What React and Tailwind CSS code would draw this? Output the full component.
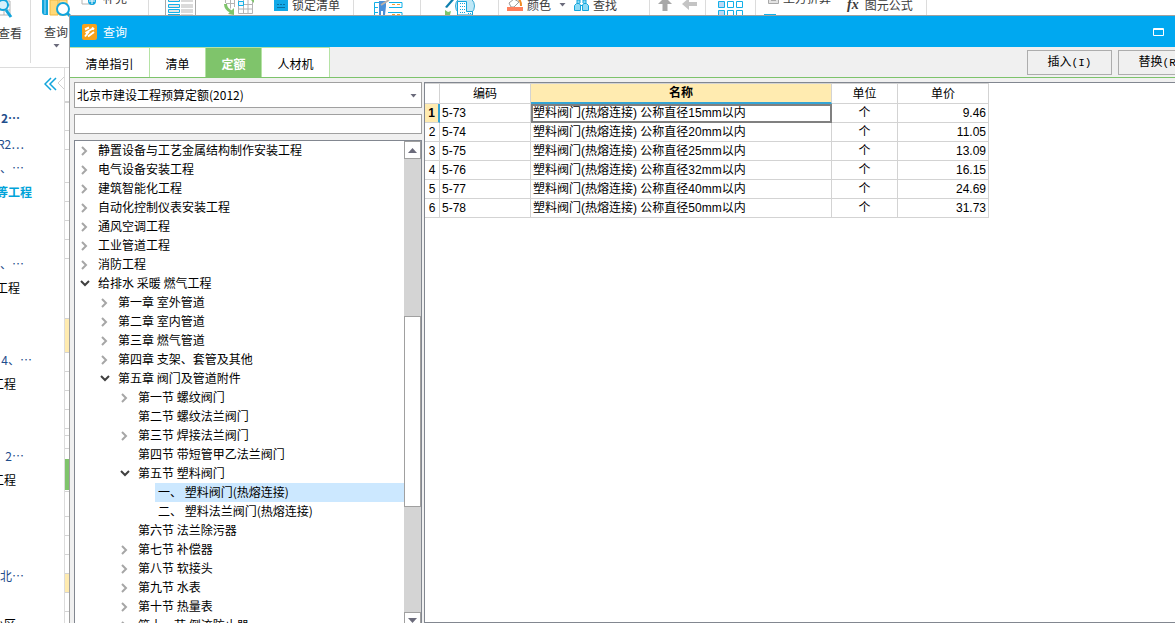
import { useState } from "react"
import clsx from "clsx"

const outline = [
  { text: "2⋯", style: "pr-11 font-bold text-[#1f4e8c] items-start leading-5" },
  { text: "R2⋯", style: "pr-10 text-[#1f4e8c] items-center leading-4" },
  { text: "、⋯", style: "pr-10 text-[#1f4e8c] items-center leading-4" },
  { text: "等工程", style: "pr-8 font-bold text-[#00a3d9] items-center leading-4" },
  { text: "", style: "" },
  { text: "", style: "" },
  { text: "、⋯", style: "pr-10 text-[#1f4e8c] items-center leading-4" },
  { text: "工程", style: "pr-11 text-black items-center leading-4" },
  { text: "", style: "" },
  { text: "", style: "" },
  { text: "4、⋯", style: "pr-8 text-[#1f4e8c] items-center leading-4" },
  { text: "工程", style: "pr-12 text-black items-center leading-4" },
  { text: "", style: "" },
  { text: "", style: "" },
  { text: "2⋯", style: "pr-10 text-[#1f4e8c] items-center leading-4" },
  { text: "工程", style: "pr-12 text-black items-center leading-4" },
  { text: "", style: "" },
  { text: "", style: "" },
  { text: "", style: "" },
  { text: "北⋯", style: "pr-10 text-[#1f4e8c] items-center leading-4" },
  { text: "", style: "" },
  { text: "小区", style: "pr-12 text-black items-center leading-4" },
]

// slice of the grid that stays visible left of the dialog
const gridSlice = [
  "h-[35px] border-b-2 border-[#3fb4e5]",
  "h-[28px] border-b",
  "h-[19px] border-b",
  "h-[33px] border-b",
  "h-[19px] border-b",
  "h-[19px] border-b",
  "h-[19px] border-b",
  "h-[19px] border-b",
  "h-[60px] border-b",
  "h-[34px] border-b bg-[#ffebb0]",
  "h-[19px] border-b",
  "h-[19px] border-b",
  "h-[19px] border-b",
  "h-[19px] border-b",
  "h-[7px] border-b",
  "h-[13px] border-b",
  "h-[10px]",
  "h-[31px] bg-[#7fc46b]",
  "h-[2px] border-b",
  "h-[25px] border-b",
  "h-[19px] border-b",
  "h-[19px] border-b",
  "h-[19px] border-b",
  "h-[19px] border-b bg-[#ffebb0]",
  "h-[19px] border-b",
]

const tree = [
  { level: 0, text: "静置设备与工艺金属结构制作安装工程", state: "closed" },
  { level: 0, text: "电气设备安装工程", state: "closed" },
  { level: 0, text: "建筑智能化工程", state: "closed" },
  { level: 0, text: "自动化控制仪表安装工程", state: "closed" },
  { level: 0, text: "通风空调工程", state: "closed" },
  { level: 0, text: "工业管道工程", state: "closed" },
  { level: 0, text: "消防工程", state: "closed" },
  { level: 0, text: "给排水 采暖 燃气工程", state: "open" },
  { level: 1, text: "第一章 室外管道", state: "closed" },
  { level: 1, text: "第二章 室内管道", state: "closed" },
  { level: 1, text: "第三章 燃气管道", state: "closed" },
  { level: 1, text: "第四章 支架、套管及其他", state: "closed" },
  { level: 1, text: "第五章 阀门及管道附件", state: "open" },
  { level: 2, text: "第一节 螺纹阀门", state: "closed" },
  { level: 2, text: "第二节 螺纹法兰阀门" },
  { level: 2, text: "第三节 焊接法兰阀门", state: "closed" },
  { level: 2, text: "第四节 带短管甲乙法兰阀门" },
  { level: 2, text: "第五节 塑料阀门", state: "open" },
  { level: 3, text: "一、 塑料阀门(热熔连接)" },
  { level: 3, text: "二、 塑料法兰阀门(热熔连接)" },
  { level: 2, text: "第六节 法兰除污器" },
  { level: 2, text: "第七节 补偿器", state: "closed" },
  { level: 2, text: "第八节 软接头", state: "closed" },
  { level: 2, text: "第九节 水表", state: "closed" },
  { level: 2, text: "第十节 热量表", state: "closed" },
  { level: 2, text: "第十一节 倒流防止器", state: "closed" },
]

const indent = ["pl-0", "pl-5", "pl-10", "pl-15"]

const rows = [
  { code: "5-73", name: "塑料阀门(热熔连接) 公称直径15mm以内", unit: "个", price: "9.46" },
  { code: "5-74", name: "塑料阀门(热熔连接) 公称直径20mm以内", unit: "个", price: "11.05" },
  { code: "5-75", name: "塑料阀门(热熔连接) 公称直径25mm以内", unit: "个", price: "13.09" },
  { code: "5-76", name: "塑料阀门(热熔连接) 公称直径32mm以内", unit: "个", price: "16.15" },
  { code: "5-77", name: "塑料阀门(热熔连接) 公称直径40mm以内", unit: "个", price: "24.69" },
  { code: "5-78", name: "塑料阀门(热熔连接) 公称直径50mm以内", unit: "个", price: "31.73" },
]

const tabs = [
  { name: "清单指引", width: "w-20" },
  { name: "清单", width: "w-14" },
  { name: "定额", width: "w-14" },
  { name: "人材机", width: "w-17" },
]

function Caret({ className }) {
  return (
    <svg width="7" height="4" viewBox="0 0 7 4" className={className}>
      <path d="M.5 0h6L3.5 3.500z" fill="#6b6b7b" />
    </svg>
  )
}

function RibbonGroup({ className, children }) {
  return (
    <div className={clsx("flex h-[63px] shrink-0 items-start border-r border-[#dcdcdc]", className)}>
      {children}
    </div>
  )
}

function SmallTool({ className, children }) {
  return (
    <button className={clsx("flex h-2.5 items-center whitespace-nowrap", className)}>{children}</button>
  )
}

function ViewIcon() {
  return (
    <svg width="13" height="19" viewBox="0 0 13 19" fill="none">
      <path d="M0 1h10v14H0M0 5h10M0 10h10M4 0v15" stroke="#b4b4b4" />
      <circle cx="3" cy="5" r="5" fill="#d9f1fb" stroke="#12a5dc" strokeWidth="2" />
      <path d="M6 10l5 7" stroke="#12a5dc" strokeWidth="3" />
    </svg>
  )
}

function QueryIcon() {
  return (
    <svg width="29" height="20" viewBox="0 0 29 20" fill="none">
      <path d="M0 0h6v15H3c-2 0-3-1-3-3z" fill="#12a5dc" />
      <path d="M3 0v14" stroke="#a8e0f7" />
      <path d="M8 0h8v15H8z" fill="#ffd978" stroke="#f0b840" />
      <path d="M17 0h8v15h-8z" fill="#ffe39a" stroke="#f0b840" />
      <circle cx="21" cy="9" r="6" fill="#fff" stroke="#12a5dc" strokeWidth="2" />
      <path d="M25 13l4 4" stroke="#12a5dc" strokeWidth="3" />
    </svg>
  )
}

function SupplementIcon() {
  return (
    <svg width="16" height="16" viewBox="0 0 16 16" fill="none">
      <path d="M1 0v14h12V0" stroke="#b4b4b4" />
      <circle cx="11" cy="11" r="4" fill="#12a5dc" />
      <path d="M11 8v6M8 11h6" stroke="#fff" />
    </svg>
  )
}

function ListIcon() {
  return (
    <svg width="31" height="15" viewBox="0 0 31 15" fill="none">
      <path d="M.5 0v15M30.500 0v15" stroke="#a8a8a8" />
      <path d="M16 0h12v2H16zM16 4h12v4H16zM16 9h12v4H16zM16 14h12v1H16z" fill="#dadada" />
      <path
        d="M3.500 0v1.500h11V0M3.500 4.500h11v3h-11zM3.500 9.500h11v3h-11zM3 14.500h12"
        stroke="#12b0e8"
        fill="#e5e5e5"
      />
    </svg>
  )
}

function SheetIcon() {
  return (
    <svg width="34" height="15" viewBox="0 0 34 15" fill="none">
      <path d="M1.500 4c0 4 2 6 6 8" stroke="#7fc46b" strokeWidth="3" />
      <path d="M4 14l6 1V8z" fill="#7fc46b" />
      <path d="M1.500 0v3M6.500 0v8.500M10.500 0v7M2 3.500h9" stroke="#b4b4b4" />
      <path d="M14.500 0v13.500h14V0M14 4.500h15M14 9h15M19.500 0v13M24 0v13" stroke="#b4b4b4" />
      <path d="M14.500 1.500h5v4h-5z" stroke="#12b0e8" fill="#e3f5fc" />
      <path d="M27 0l3 3V0z" fill="#7fc46b" />
    </svg>
  )
}

function LockIcon() {
  return (
    <svg width="14" height="12" viewBox="0 0 14 12" fill="none">
      <path d="M3.500 3V0M10.500 3V0" stroke="#12a5dc" strokeWidth="2" />
      <path d="M0 1h14v11H0z" fill="#12a9e8" />
      <path d="M3 5.500h2M6 5.500h2M9 5.500h2M3 8.500h8" stroke="#0b6fa0" />
    </svg>
  )
}

function WorkerIcon() {
  return (
    <svg width="30" height="15" viewBox="0 0 30 15" fill="none">
      <path d="M.5 15V2.500h5M1 7.500h3M1 12.500h3" stroke="#12b0e8" />
      <path d="M5 1h7v5l-1 9H9v-4H7v4H5z" fill="#4a90d9" />
      <path d="M7 5l8-5" stroke="#b9b0aa" strokeWidth="2" />
      <path d="M15 2.500h13v5H15M14 12.500h14V15" stroke="#12b0e8" />
      <path d="M18 4.500h3M23 4.500h3M18 14.500h3M23 14.500h3" stroke="#f5a130" />
    </svg>
  )
}

function CityIcon() {
  return (
    <svg width="31" height="15" viewBox="0 0 31 15" fill="none">
      <path d="M0 7l6-7h3L2 8z" fill="#0e7fae" />
      <path d="M0 10l3 2 3-1-1 4H0z" fill="#7fc46b" />
      <circle cx="20" cy="6" r="9.500" fill="#bfe8f7" stroke="#3aa9d2" />
      <path d="M12.500 15V1.500h9v10h6V15z" fill="#fff" stroke="#12a5dc" />
      <path d="M15 3.500h5M15 6.500h5M15 9.500h5M15 12.500h5M23 13.500h3" stroke="#12a5dc" strokeDasharray="1 1" />
    </svg>
  )
}

function BucketIcon() {
  return (
    <svg width="16" height="12" viewBox="0 0 16 12" fill="none">
      <path d="M2 4l5-4 5 3-5 5H4z" fill="#fff" stroke="#9a9a9a" />
      <path d="M11 0c3 1 3 4 3 7" stroke="#f08a24" strokeWidth="2" />
      <path d="M0 8h16v4H0z" fill="#ff7f5c" />
    </svg>
  )
}

function BinocularsIcon() {
  return (
    <svg width="15" height="11" viewBox="0 0 15 11" fill="none" stroke="#12a5dc">
      <path d="M3 3V0h3v3M9 3V0h3v3" fill="#8ddaf5" />
      <path d="M.5 10.500v-5l2-2h3l1 2v5zM8.500 10.500v-5l1-2h3l2 2v5z" fill="#8ddaf5" />
      <path d="M6 5.500h3" />
    </svg>
  )
}

function TilesIcon() {
  return (
    <svg width="26" height="15" viewBox="0 0 26 15" fill="none" stroke="#12b0e8">
      <path d="M.5 1.500h6v6h-6zM.5 15v-4.500h6V15" fill="#bcd9f5" />
      <path d="M9.500 1.500h6v6h-6zM18.500 1.500h6v6h-6zM9.500 15v-4.500h6V15M18.500 15v-4.500h6V15" />
    </svg>
  )
}

function Ribbon() {
  return (
    <header className="flex h-[68px] shrink-0 overflow-hidden border-b border-[#dcdcdc] text-[#3c3c3c]">
      <RibbonGroup className="w-[31px]">
        <button className="flex w-full flex-col gap-1.5">
          <ViewIcon />
          <span className="flex w-full justify-end pr-2 leading-4 whitespace-nowrap">查看</span>
        </button>
      </RibbonGroup>
      <RibbonGroup className="w-[118px] pl-2.5">
        <button className="flex w-[30px] flex-col items-center gap-1">
          <QueryIcon />
          <span className="leading-4 whitespace-nowrap">查询</span>
          <Caret />
        </button>
        <button className="-mt-2.5 ml-2.5 flex h-4 items-center gap-1.5 whitespace-nowrap">
          <SupplementIcon />
          补充
        </button>
      </RibbonGroup>
      <RibbonGroup className="w-[205px] pl-4">
        <button aria-label="清单"><ListIcon /></button>
        <button aria-label="表格" className="ml-7"><SheetIcon /></button>
        <SmallTool className="ml-4 gap-1">
          <LockIcon />
          锁定清单
        </SmallTool>
      </RibbonGroup>
      <RibbonGroup className="w-[67px] pl-5">
        <button aria-label="人材机"><WorkerIcon /></button>
      </RibbonGroup>
      <RibbonGroup className="w-[78px] pl-6">
        <button aria-label="工程"><CityIcon /></button>
      </RibbonGroup>
      <RibbonGroup className="w-[151px] pl-2">
        <SmallTool className="gap-1">
          <BucketIcon />
          颜色
          <Caret className="ml-1" />
        </SmallTool>
        <SmallTool className="ml-2 gap-1">
          <BinocularsIcon />
          查找
        </SmallTool>
      </RibbonGroup>
      <RibbonGroup className="w-14 gap-2.5 pl-2">
        <button aria-label="上移">
          <svg width="14" height="11" viewBox="0 0 14 11">
            <path d="M7-3l7 7H9.500v7h-5V4H0z" fill="#a8a8a8" />
          </svg>
        </button>
        <button aria-label="左移">
          <svg width="15" height="11" viewBox="0 0 15 11">
            <path d="M0 4l7-6v4h8v4H7v4z" fill="#c4c4c4" />
          </svg>
        </button>
      </RibbonGroup>
      <RibbonGroup className="w-[50px] pl-3">
        <button aria-label="平铺"><TilesIcon /></button>
      </RibbonGroup>
      <RibbonGroup className="w-[171px] pl-2">
        <div className="flex flex-col">
          <button className="-mt-2.5 flex h-4 items-center gap-1 pl-1 whitespace-nowrap">
            <svg width="11" height="12" viewBox="0 0 11 12" fill="#e3e3e3" stroke="#a8a8a8">
              <path d="M.5.500h10v11H.500zM3 8.500h5" />
            </svg>
            土方折算
          </button>
          <svg width="12" height="16" viewBox="0 0 12 16" className="mt-2">
            <path d="M0 0h12v16H0z" fill="#12b0e8" />
          </svg>
        </div>
        <SmallTool className="ml-4 gap-1.5">
          <span className="font-['Liberation_Serif',serif] text-sm font-bold italic">fx</span>
          图元公式
        </SmallTool>
      </RibbonGroup>
    </header>
  )
}

function Sidebar() {
  return (
    <aside className="flex w-16 shrink-0 flex-col overflow-hidden pt-2">
      <button aria-label="收起" className="ml-auto">
        <svg width="20" height="16" viewBox="0 0 20 16" fill="none">
          <path d="M7 2L1 8l6 6M12 2L6 8l6 6" stroke="#12a5dc" strokeWidth="1.500" />
          <path d="M20 1l-6 6 6 6" stroke="#d0d0d0" />
        </svg>
      </button>
      <ul className="pt-4">
        {outline.map((item, index) => (
          <li key={index} className={clsx("flex h-6 justify-end whitespace-nowrap", item.style)}>
            {item.text}
          </li>
        ))}
      </ul>
    </aside>
  )
}

function TreeRow({ item, selected, onSelect }) {
  return (
    <li className={clsx("flex h-[19px] shrink-0", indent[item.level])}>
      {item.state ? (
        <button aria-label={item.text} className="flex w-5 items-center justify-center pr-px">
          {item.state === "open" ? (
            <svg width="10" height="7" viewBox="0 0 10 7" fill="none">
              <path d="M1 1l4 4 4-4" stroke="#404040" strokeWidth="2" />
            </svg>
          ) : (
            <svg width="7" height="10" viewBox="0 0 7 10" fill="none">
              <path d="M1 1l4 4-4 4" stroke="#a6a6a6" strokeWidth="2" />
            </svg>
          )}
        </button>
      ) : (
        <span className="w-5" />
      )}
      <button
        onClick={onSelect}
        className={clsx("flex-1 pb-0.5 pl-[3px] text-left leading-4 whitespace-nowrap", selected && "bg-[#cce8ff]")}
      >
        {item.text}
      </button>
    </li>
  )
}

function ScrollBar() {
  return (
    <div className="flex w-[17px] shrink-0 flex-col bg-[#d4d4d4]">
      <button aria-label="向上" className="flex h-[18px] items-center justify-center border border-[#a0a0a0] bg-white">
        <svg width="9" height="5" viewBox="0 0 9 5">
          <path d="M0 5h9L4.500 0z" fill="#6b6b7b" />
        </svg>
      </button>
      <div className="flex-[158]" />
      <div className="flex-[190] border border-[#a0a0a0] bg-white" />
      <div className="flex-[105]" />
      <button aria-label="向下" className="flex h-[17px] items-center justify-center border border-[#a0a0a0] bg-white">
        <svg width="9" height="5" viewBox="0 0 9 5">
          <path d="M0 0h9L4.500 5z" fill="#6b6b7b" />
        </svg>
      </button>
    </div>
  )
}

function PriceTable() {
  return (
    <table className="w-[564px] table-fixed border-separate border-spacing-0 border-t border-[#d3d3d3] font-['Liberation_Sans','Noto_Sans_CJK_SC',sans-serif] whitespace-nowrap">
      <colgroup>
        <col className="w-[15px]" />
        <col className="w-[91px]" />
        <col className="w-[301px]" />
        <col className="w-[66px]" />
        <col className="w-[91px]" />
      </colgroup>
      <thead>
        <tr className="h-5 leading-4">
          <th className="border-r border-b border-[#d3d3d3] p-0" />
          <th className="border-r border-b border-[#d3d3d3] p-0 font-normal">编码</th>
          <th className="border-r border-b-2 border-r-[#d3d3d3] border-b-[#35a5d5] bg-[#ffebb0] p-0 font-bold">名称</th>
          <th className="border-r border-b border-[#d3d3d3] p-0 font-normal">单位</th>
          <th className="border-r border-b border-[#d3d3d3] p-0 font-normal">单价</th>
        </tr>
      </thead>
      <tbody>
        {rows.map((row, index) => {
          const active = index === 0

          return (
            <tr key={row.code} className="h-[19px] leading-4">
              <th
                className={clsx(
                  "border-b border-b-[#d3d3d3] p-0",
                  active ? "border-r-2 border-r-[#35a5d5] bg-[#ffebb0] font-bold" : "border-r border-r-[#d3d3d3] font-normal"
                )}
              >
                {index + 1}
              </th>
              <td className="border-r border-b border-[#d3d3d3] p-0 pl-0.5">{row.code}</td>
              <td
                className={clsx(
                  "border-r border-b border-[#d3d3d3] p-0 pl-0.5",
                  active && "outline-2 -outline-offset-2 outline-[#808080]"
                )}
              >
                {row.name}
              </td>
              <td className="border-r border-b border-[#d3d3d3] p-0 text-center">{row.unit}</td>
              <td className="border-r border-b border-[#d3d3d3] p-0 pr-0.5 text-right">{row.price}</td>
            </tr>
          )
        })}
      </tbody>
    </table>
  )
}

function QueryDialog() {
  const [tab, setTab] = useState("定额")
  const [selected, setSelected] = useState(18)

  return (
    <section className="absolute top-[15px] -right-8 -bottom-[7px] left-[69px] flex flex-col border-t border-l border-[#a0a0a0] bg-[#f0f0f0]">
      <div className="flex h-[31px] shrink-0 items-center gap-1.5 bg-[#00a8f0] pr-[43px] pl-3 text-white">
        <svg width="15" height="16" viewBox="0 0 15 16" fill="none">
          <rect width="15" height="16" rx="2" fill="#f7a11b" />
          <path d="M3 5.500l4-2M3.500 9l8-5M3 12.500l4-5M6 12.500l6-4.500M10 3.500l2 2" stroke="#fff" strokeWidth="2" />
        </svg>
        <h1 className="leading-4">查询</h1>
        <button aria-label="最大化" className="ml-auto">
          <svg width="11" height="8" viewBox="0 0 11 8" fill="none">
            <path d="M.5.500h10v7H.500zM0 1.500h11" stroke="#fff" />
          </svg>
        </button>
      </div>

      <div className="flex h-[31px] shrink-0 items-center border-b border-[#7dc36b] pr-1">
        <nav className="flex self-stretch">
          {tabs.map((item) => (
            <button
              key={item.name}
              onClick={() => setTab(item.name)}
              className={clsx(
                "border-t border-r border-[#b5e3a5] pt-0.5 leading-4",
                item.width,
                tab === item.name ? "bg-[#7fc46b] font-bold text-white" : "bg-white"
              )}
            >
              {item.name}
            </button>
          ))}
        </nav>
        <div className="ml-auto flex gap-1.5">
          <button className="h-[25px] w-[85px] border border-[#adadad] leading-4">
            插入<span className="font-['Liberation_Mono',monospace] text-[11px]">(I)</span>
          </button>
          <button className="h-[25px] w-[85px] border border-[#adadad] leading-4">
            替换<span className="font-['Liberation_Mono',monospace] text-[11px]">(R)</span>
          </button>
        </div>
      </div>

      <div className="flex min-h-0 flex-1 gap-0.5 pt-1 pl-1">
        <div className="flex w-[348px] shrink-0 flex-col gap-1.5">
          <div className="relative flex h-[26px] shrink-0">
            <select
              aria-label="定额库"
              className="w-full appearance-none rounded-none border border-[#a0a0a0] bg-white pl-0.5 leading-4"
            >
              <option>北京市建设工程预算定额(2012)</option>
            </select>
            <Caret className="pointer-events-none absolute top-3 right-[5px]" />
          </div>
          <input
            type="text"
            aria-label="搜索"
            className="h-5 shrink-0 border border-[#a0a0a0] bg-white px-1"
          />
          <div className="flex min-h-0 flex-1 border border-[#828790] bg-white">
            <ul className="flex min-w-0 flex-1 flex-col overflow-hidden">
              {tree.map((item, index) => (
                <TreeRow
                  key={item.text}
                  item={item}
                  selected={selected === index}
                  onSelect={() => setSelected(index)}
                />
              ))}
            </ul>
            <ScrollBar />
          </div>
        </div>

        <div className="mb-[7px] min-w-0 flex-1 border border-[#828790] bg-white">
          <PriceTable />
        </div>
      </div>
    </section>
  )
}

export default function App() {
  return (
    <div className="relative flex h-screen flex-col overflow-hidden bg-white font-['Noto_Sans_CJK_SC',sans-serif] text-xs text-black">
      <Ribbon />
      <main className="flex min-h-0 flex-1 overflow-hidden">
        <Sidebar />
        <div className="w-full border-l border-[#dcdcdc]">
          {gridSlice.map((style, index) => (
            <div key={index} className={clsx("border-[#d3d3d3]", style)} />
          ))}
        </div>
      </main>
      <QueryDialog />
    </div>
  )
}
